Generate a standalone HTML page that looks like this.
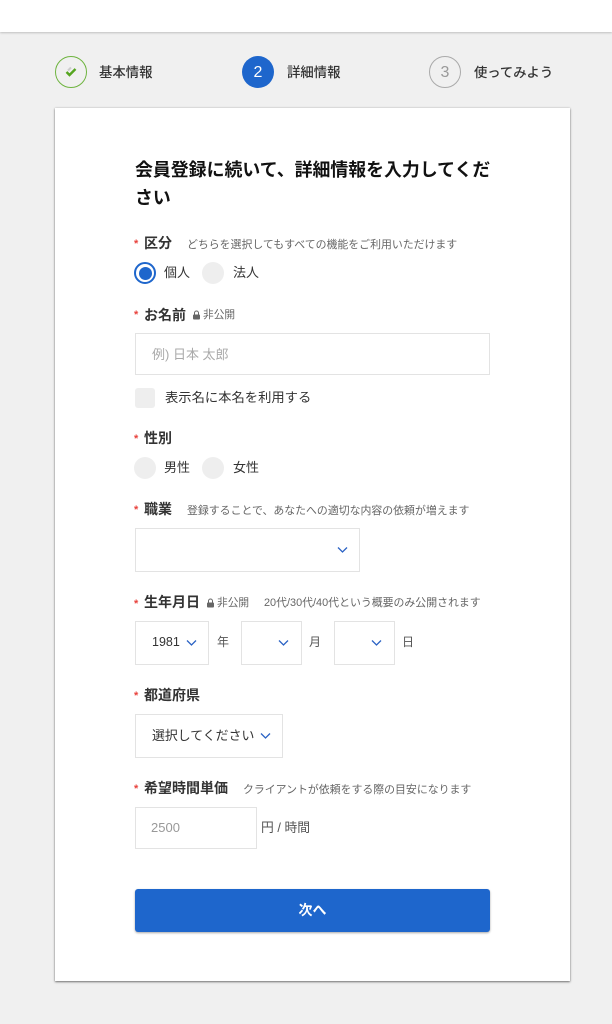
<!DOCTYPE html>
<html lang="ja">
<head>
<meta charset="utf-8">
<style>
html,body{margin:0;padding:0}
body{width:612px;height:1024px;background:#f0f0f0;position:relative;overflow:hidden;font-family:"Liberation Sans","Noto Sans CJK JP",sans-serif;color:#333}
.a{position:absolute;white-space:nowrap}
#top{left:0;top:0;width:612px;height:32px;background:#fff;box-shadow:0 1px 2px rgba(0,0,0,.2)}
#card{left:55px;top:108px;width:515px;height:873px;background:#fff;box-shadow:0 1px 2px rgba(0,0,0,.5),0 0 2px rgba(0,0,0,.15)}
.c{width:32px;height:32px;border-radius:50%;box-sizing:border-box;text-align:center;line-height:33px;font-size:16px}
.st{font-size:13.4px;line-height:16px;color:#333;font-weight:500}
.h{font-size:17.9px;font-weight:700;color:#111;line-height:30px;left:135px}
.l{font-size:14px;font-weight:700;color:#333;line-height:18px}
.s{color:#e8413c;font-size:11px;line-height:12px;left:134px;font-weight:700}
.n{font-size:10.9px;color:#666;line-height:14px}
.t{font-size:13px;color:#333;line-height:18px}
.r{width:22px;height:22px;border-radius:50%;background:#eee}
.b{box-sizing:border-box;border:1px solid #e3e3e3;background:#fff}
svg{position:absolute;display:block}
</style>
</head>
<body>
<div class="a" id="top"></div>

<div class="a c" style="left:55px;top:56px;border:1px solid #6eb43f;"></div>
<svg style="left:63px;top:65px" width="16" height="14" viewBox="0 0 16 14"><path d="M5 5.5l3-3" fill="none" stroke="#ccc" stroke-width="2"/><path d="M3.5 7l3 3 6-6" fill="none" stroke="#55a51f" stroke-width="2.4"/></svg>
<div class="a st" style="left:99px;top:65px">基本情報</div>
<div class="a c" style="left:242px;top:56px;background:#1e66cc;color:#fff;">2</div>
<div class="a st" style="left:287px;top:65px">詳細情報</div>
<div class="a c" style="left:429px;top:56px;border:1px solid #aaa;color:#999;line-height:31px">3</div>
<div class="a st" style="left:474px;top:65px;font-size:13.3px">使ってみよう</div>

<div class="a" id="card"></div>

<div class="a h" style="top:155px">会員登録に続いて、詳細情報を入力してくだ</div>
<div class="a h" style="top:183px">さい</div>

<div class="a s" style="top:238px">*</div>
<div class="a l" style="left:144px;top:234px">区分</div>
<div class="a n" style="left:187px;top:238px">どちらを選択してもすべての機能をご利用いただけます</div>
<div class="a r" style="left:134px;top:262px;box-sizing:border-box;background:#fff;border:2px solid #1e66cc"></div>
<div class="a" style="left:138.5px;top:266.5px;width:13px;height:13px;border-radius:50%;background:#1e66cc"></div>
<div class="a t" style="left:164px;top:264px">個人</div>
<div class="a r" style="left:202px;top:262px"></div>
<div class="a t" style="left:233px;top:264px">法人</div>

<div class="a s" style="top:309px">*</div>
<div class="a l" style="left:144px;top:306px">お名前</div>
<svg style="left:192px;top:310px" width="9" height="10" viewBox="0 0 9 10"><path d="M2.5 4.5V3a2 2 0 0 1 4 0v1.5" fill="none" stroke="#666" stroke-width="1"/><rect x="1" y="4.5" width="7" height="5" rx="1" fill="#666"/></svg>
<div class="a n" style="left:203px;top:308px;font-size:10.7px">非公開</div>
<div class="a b" style="left:135px;top:333px;width:355px;height:42px"></div>
<div class="a t" style="left:152px;top:346px;color:#aaa">例) 日本 太郎</div>
<div class="a" style="left:135px;top:388px;width:20px;height:20px;border-radius:3px;background:#eee"></div>
<div class="a t" style="left:165px;top:389px;font-size:13.3px">表示名に本名を利用する</div>

<div class="a s" style="top:433px">*</div>
<div class="a l" style="left:144px;top:429px">性別</div>
<div class="a r" style="left:134px;top:457px"></div>
<div class="a t" style="left:164px;top:459px">男性</div>
<div class="a r" style="left:202px;top:457px"></div>
<div class="a t" style="left:233px;top:459px">女性</div>

<div class="a s" style="top:504px">*</div>
<div class="a l" style="left:144px;top:500px">職業</div>
<div class="a n" style="left:187px;top:504px">登録することで、あなたへの適切な内容の依頼が増えます</div>
<div class="a b" style="left:135px;top:528px;width:225px;height:44px"></div>
<svg style="left:337px;top:546px" width="11" height="8" viewBox="0 0 11 8"><path d="M1 1.5l4.5 4.5L10 1.5" fill="none" stroke="#2b62c4" stroke-width="1.3"/></svg>

<div class="a s" style="top:598px">*</div>
<div class="a l" style="left:144px;top:593px">生年月日</div>
<svg style="left:206px;top:598px" width="9" height="10" viewBox="0 0 9 10"><path d="M2.5 4.5V3a2 2 0 0 1 4 0v1.5" fill="none" stroke="#666" stroke-width="1"/><rect x="1" y="4.5" width="7" height="5" rx="1" fill="#666"/></svg>
<div class="a n" style="left:217px;top:596px;font-size:10.7px">非公開</div>
<div class="a n" style="left:264px;top:596px">20代/30代/40代という概要のみ公開されます</div>

<div class="a b" style="left:135px;top:621px;width:74px;height:44px"></div>
<div class="a t" style="left:152px;top:633px;font-size:12.5px">1981</div>
<svg style="left:186px;top:639px" width="11" height="8" viewBox="0 0 11 8"><path d="M1 1.5l4.5 4.5L10 1.5" fill="none" stroke="#2b62c4" stroke-width="1.3"/></svg>
<div class="a t" style="left:217px;top:633px;font-size:12px;color:#555">年</div>
<div class="a b" style="left:241px;top:621px;width:61px;height:44px"></div>
<svg style="left:278px;top:639px" width="11" height="8" viewBox="0 0 11 8"><path d="M1 1.5l4.5 4.5L10 1.5" fill="none" stroke="#2b62c4" stroke-width="1.3"/></svg>
<div class="a t" style="left:309px;top:633px;font-size:12px;color:#555">月</div>
<div class="a b" style="left:334px;top:621px;width:61px;height:44px"></div>
<svg style="left:371px;top:639px" width="11" height="8" viewBox="0 0 11 8"><path d="M1 1.5l4.5 4.5L10 1.5" fill="none" stroke="#2b62c4" stroke-width="1.3"/></svg>
<div class="a t" style="left:402px;top:633px;font-size:12px;color:#555">日</div>

<div class="a s" style="top:690px">*</div>
<div class="a l" style="left:144px;top:686px">都道府県</div>
<div class="a b" style="left:135px;top:714px;width:148px;height:44px"></div>
<div class="a t" style="left:152px;top:727px;font-size:12.9px">選択してください</div>
<svg style="left:260px;top:732px" width="11" height="8" viewBox="0 0 11 8"><path d="M1 1.5l4.5 4.5L10 1.5" fill="none" stroke="#2b62c4" stroke-width="1.3"/></svg>

<div class="a s" style="top:783px">*</div>
<div class="a l" style="left:144px;top:779px">希望時間単価</div>
<div class="a n" style="left:243px;top:783px">クライアントが依頼をする際の目安になります</div>
<div class="a b" style="left:135px;top:807px;width:122px;height:42px"></div>
<div class="a t" style="left:151px;top:819px;font-size:13px;color:#999">2500</div>
<div class="a t" style="left:261px;top:819px;font-size:12.8px;color:#555">円 / 時間</div>

<div class="a" style="left:135px;top:889px;width:355px;height:43px;background:#1e66cc;border-radius:3px;box-shadow:0 1px 2px rgba(0,0,0,.35);color:#fff;font-size:14px;font-weight:700;text-align:center;line-height:43px">次へ</div>
</body>
</html>
